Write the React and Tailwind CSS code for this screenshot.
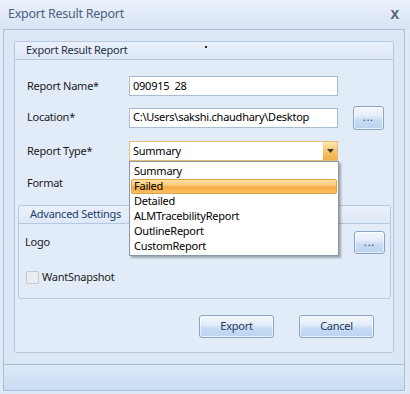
import React from "react";

const font = { fontFamily: '"Segoe UI", "Noto Sans", "Open Sans", sans-serif' };

function BlueButton({ className = "", children }) {
  return (
    <div
      className={
        "flex items-center justify-center rounded-[3px] border border-[#8aa4c8] bg-[linear-gradient(to_bottom,#f4f8fd_0%,#e3edf9_40%,#c6dbf3_60%,#bcd4f0_100%)] text-[#1e395b] shadow-[inset_0_0_0_1px_rgba(255,255,255,0.6)] " +
        className
      }
    >
      {children}
    </div>
  );
}

export default function App() {
  const items = ["Summary", "Failed", "Detailed", "ALMTracebilityReport", "OutlineReport", "CustomReport"];
  return (
    <div
      className="w-[410px] h-[394px] bg-[#dfe9f6] text-[11px] tracking-[-0.25px] text-[#1b1b1b] overflow-hidden flex flex-col relative"
      style={font}
    >
      {/* Title bar */}
      <div className="h-[29px] shrink-0 flex items-center justify-between pl-[8px] pr-[11px] bg-[linear-gradient(to_bottom,#e9f1fb_0%,#e1eaf7_50%,#d9e5f4_100%)]">
        <span className="text-[12.5px] text-[#4e6080] leading-none mt-[-1px]">Export Result Report</span>
        <span className="text-[13px] font-bold text-[#5a6478] leading-none mt-[-1px]">X</span>
      </div>

      {/* Main panel */}
      <div className="mx-[3px] mr-[5px] h-[335px] shrink-0 border border-[#a9bfdb] border-b-0 bg-[#dce7f5] pt-[11px] px-[10px]">
        {/* Group box */}
        <div className="relative w-[380px] h-[312px] rounded-[3px] border border-[#b5c8e0] bg-[#e2ecf8] flex flex-col">
          <div className="h-[18px] shrink-0 border-b border-[#b5c8e0] rounded-t-[3px] bg-[linear-gradient(to_bottom,#eaf1fb,#dde8f6)] flex items-center pl-[11px] text-[#1e2e44]">
            Export Result Report
          </div>
          <div className="absolute left-[190px] top-[4px] w-[2px] h-[2px] bg-[#222]" />

          {/* Report Name */}
          <div className="flex items-center mt-[16px] h-[20px]">
            <span className="w-[114px] pl-[12px] shrink-0">Report Name*</span>
            <div className="w-[209px] h-[20px] border border-[#abbbd2] bg-white flex items-center pl-[3px] text-black">
              090915&nbsp;&nbsp;28
            </div>
          </div>

          {/* Location */}
          <div className="flex items-center mt-[11px] h-[21px]">
            <span className="w-[114px] pl-[12px] shrink-0">Location*</span>
            <div className="w-[209px] h-[20px] border border-[#abbbd2] bg-white flex items-center pl-[3px] text-black">
              C:\Users\sakshi.chaudhary\Desktop
            </div>
            <BlueButton className="ml-[15px] w-[31px] h-[24px] text-[10px] tracking-[1px]">...</BlueButton>
          </div>

          {/* Report Type */}
          <div className="relative flex items-center mt-[13px] h-[20px]">
            <span className="w-[114px] pl-[12px] shrink-0">Report Type*</span>
            <div className="relative w-[209px] h-[20px] border border-[#e3bd7a] bg-white flex items-center pl-[3px] text-black">
              Summary
              <div className="absolute right-0 top-0 bottom-0 w-[14px] bg-[linear-gradient(to_bottom,#fde7b4,#f7c46d_50%,#f3ae46)] flex items-center justify-center">
                <svg width="7" height="4" viewBox="0 0 7 4">
                  <path d="M0 0 H7 L3.5 4 Z" fill="#3a3a3a" />
                </svg>
              </div>
              {/* Dropdown list */}
              <div className="absolute left-[-1px] top-[19px] w-[210px] h-[95px] bg-white border border-[#8a97a8] shadow-[2px_2px_2px_rgba(0,0,0,0.3)] z-10 pt-[2px]">
                {items.map((it, i) => (
                  <div
                    key={it}
                    className={
                      i === 1
                        ? "h-[15px] mx-[1px] flex items-center pl-[2px] rounded-[2px] border border-[#e0a045] bg-[linear-gradient(to_bottom,#fde3a8_0%,#fbc36f_45%,#f7a843_55%,#fac062_100%)] text-black"
                        : "h-[15px] flex items-center pl-[4px] text-black"
                    }
                  >
                    {it}
                  </div>
                ))}
              </div>
            </div>
          </div>

          {/* Format */}
          <div className="flex items-center mt-[12px] h-[20px]">
            <span className="w-[114px] pl-[12px] shrink-0">Format</span>
          </div>

          {/* Advanced settings */}
          <div className="mt-[12px] ml-[3px] w-[373px] h-[94px] rounded-[3px] border border-[#b5c8e0] bg-[#e2ecf8] flex flex-col">
            <div className="h-[18px] shrink-0 border-b border-[#b5c8e0] rounded-t-[3px] bg-[linear-gradient(to_bottom,#eaf1fb,#dde8f6)] flex items-center pl-[11px] text-[#1e3f6e]">
              Advanced Settings
            </div>
            <div className="flex items-center justify-between mt-[7px] h-[23px] pl-[6px] pr-[5px]">
              <span>Logo</span>
              <BlueButton className="w-[31px] h-[23px] text-[10px] tracking-[1px]">...</BlueButton>
            </div>
            <div className="flex items-center mt-[15px] pl-[7px]">
              <div className="w-[13px] h-[13px] border border-[#c3c9d2] bg-[#eaecef] rounded-[1px]" />
              <span className="ml-[3px]">WantSnapshot</span>
            </div>
          </div>

          {/* Buttons */}
          <div className="flex justify-end mt-[16px] pr-[19px] gap-[25px]">
            <BlueButton className="w-[75px] h-[23px] text-[11px]">Export</BlueButton>
            <BlueButton className="w-[75px] h-[23px] text-[11px]">Cancel</BlueButton>
          </div>
        </div>
      </div>

      {/* Status bar */}
      <div className="mx-[3px] mr-[5px] h-[27px] shrink-0 border border-[#a9bfdb] border-t-[#a8bcd6] bg-[linear-gradient(to_bottom,#dce8f6,#c9dcf2)]" />
    </div>
  );
}
